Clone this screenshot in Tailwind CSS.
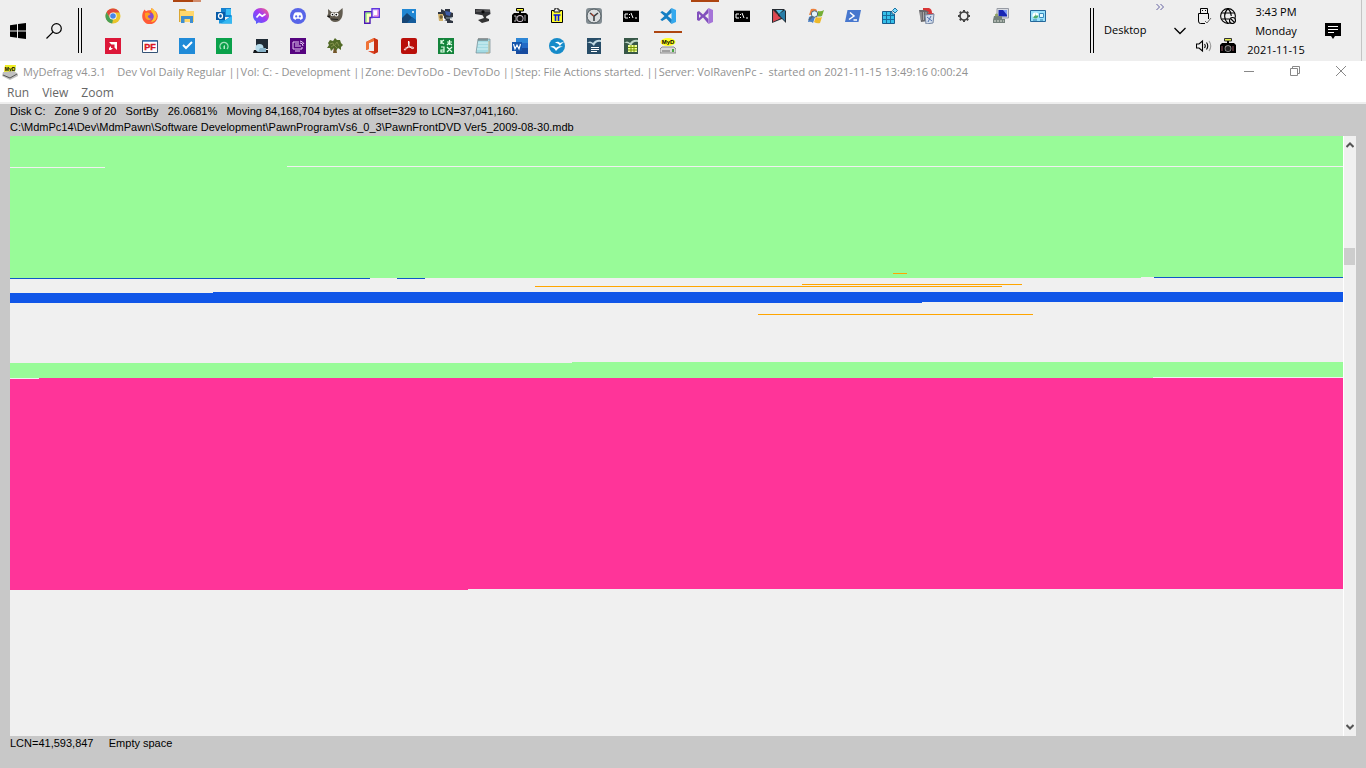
<!DOCTYPE html>
<html lang="en">
<head>
<meta charset="utf-8">
<title>MyDefrag v4.3.1</title>
<script src="https://cdn.jsdelivr.net/npm/@tailwindcss/browser@4"></script>
</head>
<body class="flex h-screen flex-col overflow-hidden bg-[#c8c8c8] font-['Open_Sans','Noto_Sans',sans-serif] text-xs text-black">
<header class="flex h-[61px] shrink-0 items-center bg-[#eeeeee]">
  <button aria-label="Start" class="ml-[10px]"><svg class="size-4" viewBox="0 0 16 16"><path d="M0 2.2 7 1.2V7.5H0ZM8 1 16 0V7.5H8ZM0 8.5H7V14.8L0 13.8ZM8 8.5H16V16L8 15Z"/></svg></button>
  <button aria-label="Search" class="ml-5"><svg class="size-4" viewBox="0 0 16 16" fill="none" stroke="#000" stroke-width="1.2"><circle cx="10.5" cy="5.5" r="4.8"/><path d="M7.1 8.9 0.5 15.5"/></svg></button>
  <div class="ml-4 h-[45px] w-1 border-x border-black"></div>
  <nav aria-label="Pinned programs" class="ml-3 grid grid-cols-[repeat(26,37px)] grid-rows-[31px_30px] [&>button]:relative [&>button]:flex [&>button]:items-center [&>button]:pl-[11px] [&_svg]:size-4">
    <button aria-label="Chrome"><svg viewBox="0 0 16 16"><circle cx="8" cy="8" r="7.5" fill="#eac52b"/><path d="M1.5 4.2A7.5 7.5 0 0 1 14.5 4.4H8L5 10Z" fill="#df493b"/><path d="M1.5 4.2 5 10 8 11.5 7.2 15.5A7.5 7.5 0 0 1 1.5 4.2Z" fill="#4a9f55"/><circle cx="8" cy="8" r="3.6" fill="#fff"/><circle cx="8" cy="8" r="2.8" fill="#4687e8"/></svg></button>
    <button aria-label="Firefox"><svg viewBox="0 0 16 16"><path d="M1 4 2.5 1.5 4 3.2C6 2 8 2.5 9 2L9.5 0C12 1.5 12.4 3 12.4 3L14 3.5A8 8 0 0 1 14 13 7.6 7.6 0 0 1 1 12C-.3 9 .2 6 1 4Z" fill="#ff5a36"/><path d="M9.5 0C14 3 15.5 6 14.5 10A6 6 0 0 1 9 14C12 11 12 6 9 3Z" fill="#ffc52d"/><circle cx="8" cy="8.5" r="3.7" fill="#854cd2"/><path d="M3 5C6 3.5 8 5 8.5 6.5L5.7 8C6 10 8 11 10 10.5 7 13.5 3 11.5 3 8Z" fill="#ff9d20"/></svg></button>
    <button aria-label="File Explorer"><i class="absolute left-[5px] top-0 flex h-0.5 w-7 bg-[#d28d6c]"><b class="w-5 bg-[#ad4510]"></b></i><svg viewBox="0 0 16 16"><path d="M0 1H6L7.5 3H15V14H0Z" fill="#d9a632"/><path d="M1 3H15V14H1Z" fill="#ffd76c"/><path d="M2 8H14V15H11V11H5.5V15H2Z" fill="#3e8ed0"/></svg></button>
    <button aria-label="Outlook"><svg viewBox="0 0 16 16"><path d="M5 0H15V9H5Z" fill="#1681d0"/><path d="M10 1H15V7H10Z" fill="#39bdf5"/><path d="M3 8 9.5 12 16 7V15.5H3Z" fill="#1494dd"/><path d="M5 15.5 16 8V15.5Z" fill="#35b8f1"/><path d="M0 4H9V12H0Z" fill="#075ba8"/><ellipse cx="4.5" cy="8" rx="2" ry="2.4" fill="none" stroke="#fff" stroke-width="1.3"/></svg></button>
    <button aria-label="Messenger"><svg viewBox="0 0 16 16"><defs><linearGradient id="messenger" x1="0" y1="1" x2="1" y2="0"><stop stop-color="#3b69ff"/><stop offset=".55" stop-color="#a239f5"/><stop offset="1" stop-color="#ff6576"/></linearGradient></defs><path d="M8 0C3 0 0 3.3 0 7.5 0 10 1 12 3 13.4V16L5.6 14.6C12 16 16 12 16 7.5 16 3 12.5 0 8 0Z" fill="url(#messenger)"/><path d="M3.5 9.5 6.5 6.2 9.2 8.2 12.5 6" fill="none" stroke="#fff" stroke-width="1.7"/></svg></button>
    <button aria-label="Discord"><svg viewBox="0 0 16 16"><circle cx="8" cy="8" r="8" fill="#5865e8"/><path d="M5 4.5 7 4.2H9L11 4.5C12.5 6 13 8.5 12.8 10.5L10.5 12 9.7 10.8H6.3L5.5 12 3.2 10.5C3 8.5 3.5 6 5 4.5Z" fill="#fff"/><circle cx="6.2" cy="8.4" r="1.1" fill="#5865e8"/><circle cx="9.8" cy="8.4" r="1.1" fill="#5865e8"/></svg></button>
    <button aria-label="GIMP"><svg viewBox="0 0 16 16"><path d="M1 1 5 4.5 11 4 15.5 0C16 5 16 10 12 13 8 15 4 14 2.5 10L0 8.5 1.2 5.5Z" fill="#625c50"/><path d="M0 8 3 7.5 2.5 10Z" fill="#111"/><circle cx="5.4" cy="6.5" r="1.8" fill="#fff"/><circle cx="9.4" cy="6.5" r="2.1" fill="#fff"/><circle cx="5.5" cy="6.6" r=".8"/><circle cx="9.3" cy="6.6" r=".9"/><path d="M4 11 11 11.5" stroke="#222"/></svg></button>
    <button aria-label="Display layouts"><svg viewBox="0 0 16 16"><path d="M.7 3.7H8V9.5H6V15.3H.7Z" fill="#ffffbd" stroke="#4b19b4" stroke-width="1.4"/><path d="M8 .7H15.3V9.3H8Z" fill="#eddaff" stroke="#6135dd" stroke-width="1.4"/><path d="M2 14V5H7" fill="none" stroke="#63d775"/><path d="M10 3H13V7H10Z" fill="#fff"/><path d="M14 2V8H10" fill="none" stroke="#e66ad5"/></svg></button>
    <button aria-label="Photos"><svg viewBox="0 0 16 16"><path d="M1 1H15V15H1Z" fill="#2187d3"/><path d="M1 10 6 5 15 13V15H1Z" fill="#164676"/><path d="M6 15 11 9 15 12V15Z" fill="#145c9c"/><circle cx="12" cy="4" r="1" fill="#fff"/></svg></button>
    <button aria-label="Device utility"><svg viewBox="0 0 16 16"><path d="M3 1 7 3V1H12V4L15 5V9L12 10V12L15 13V15H9V13L6 12V8L3 6H0V4H3Z" fill="#303642"/><path d="M7 3 13 4 12 8 8 7Z" fill="#3e5da8"/><path d="M0 6H5V13H1Z" fill="#d2b36d"/><path d="M3 7V11M1.5 9H5" stroke="#584a29"/><path d="M5 9 8 12H5Z" fill="#fff"/><path d="M8 10H14" stroke="#8aa0a8"/></svg></button>
    <button aria-label="Webcam"><svg viewBox="0 0 16 16"><path d="M0 1 15 1.5 15.5 6 12 8 0 6Z" fill="#303135"/><path d="M1 3H15" stroke="#777"/><path d="M7 6H12L11 10 14 11V13L7 15 3 12 9 10Z" fill="#333"/><circle cx="8" cy="3.8" r="1.6" fill="#090909"/></svg></button>
    <button aria-label="Camera"><svg viewBox="0 0 16 16"><path d="M4.5 .5H11.5V3H4.5Z" fill="#ffff35" stroke="#000"/><path d="M7 3H9V5H14L16 7V15H0V7L2 5H7Z"/><circle cx="8" cy="10.5" r="3.5" fill="#d2c5d2"/><circle cx="8" cy="10.5" r="2.6" fill="#111"/><path d="M2 8H4V13H2M12 8H14M12 10H14M12 12H14" stroke="#aaa" fill="none"/></svg></button>
    <button aria-label="Pi clipboard"><svg viewBox="0 0 16 16"><path d="M2.5 2.5H13.5V14.5H2.5Z" fill="#ffff31" stroke="#000"/><path d="M5 2H6V0H9V2H11V4H5Z" fill="#eee" stroke="#111"/><path d="M4.5 7H11.5M6.5 7V13M9.5 7V13" stroke="#0718dc" stroke-width="1.6"/></svg></button>
    <button aria-label="Alarms and Clock"><svg viewBox="0 0 16 16"><rect width="16" height="16" rx="3" fill="#828c92"/><circle cx="8" cy="8" r="7" fill="#dadddf" stroke="#4e585d" stroke-width="1"/><path d="M4 5 8 8.2 12 5M8 8V13" fill="none" stroke="#3e4246" stroke-width="1.6"/><path d="M8 8 5 5.5" stroke="#ce4a30"/></svg></button>
    <button aria-label="Command prompt"><svg viewBox="0 0 16 16"><path d="M0 2H16V14H0Z"/><path d="M0 2.5H16" stroke="#aaa"/><path d="M5 6H2V10H5M6.5 6V7M6.5 9V10M8 5 10 10M12 10H14" fill="none" stroke="#fff"/></svg></button>
    <button aria-label="Visual Studio Code"><svg viewBox="0 0 16 16"><path d="M11.5 0 6.3 5.5 2.2 3 .3 4.2 4.5 8 .3 11.8 2.2 13 6.3 10.5 11.5 16 12 11.5 7.8 8 12 4.5Z" fill="#157fc4"/><path d="M11.5 0 16 2V14L11.5 16Z" fill="#35a9ee"/></svg></button>
    <button aria-label="Visual Studio"><i class="absolute left-[5px] top-0 h-0.5 w-7 bg-[#ad4510]"></i><svg viewBox="0 0 16 16"><path d="M0 4 2 3 6 6.5 11.5 0V5L8 8 11.5 11V16L6 9.5 2 13 0 12ZM2 6V10L4 8Z" fill="#8250bd" fill-rule="evenodd"/><path d="M11.5 0 16 2V14L11.5 16Z" fill="#a574d8"/></svg></button>
    <button aria-label="Developer command prompt"><svg viewBox="0 0 16 16"><path d="M0 2H16V14H0Z"/><path d="M0 2.5H16" stroke="#aaa"/><path d="M5 6H2V10H5M6.5 6V7M6.5 9V10M8 5 10 10M12 10H14" fill="none" stroke="#fff"/></svg></button>
    <button aria-label="Notepad utility"><svg viewBox="0 0 16 16"><path d="M1 1H13L15 3V15L11 11 6 13 1 15Z" fill="#252a31"/><path d="M2 2 7 7V11L2 14Z" fill="#c84c50"/><path d="M5 2H12L8 6Z" fill="#55bfe3"/><path d="M8 6 14 2V13L10 9Z" fill="#287da7"/><path d="M3 5 10 10 6 12 2 13Z" fill="#df4651"/></svg></button>
    <button aria-label="Windows search"><svg viewBox="0 0 16 16"><path d="M3 1Q7 0 9 2L7 8Q4 6 1 7Z" fill="#ec813d"/><path d="M10 3Q13 4 16 2L14 8Q11 9 8 8Z" fill="#75ae35"/><path d="M1 9Q4 7 7 9L5 15Q3 13 0 14Z" fill="#497fc5"/><path d="M8 9Q11 10 14 9L12 15Q9 16 6 14Z" fill="#edb92b"/><circle cx="6.5" cy="6" r="3.2" fill="#e2f4fb" stroke="#52677a"/><path d="M4.2 8.5 1 12" stroke="#52677a" stroke-width="1.6"/></svg></button>
    <button aria-label="PowerShell"><svg viewBox="0 0 16 16"><path d="M2.5 2H16L13.5 14H0Z" fill="#4777ce"/><path d="M5 4.5 9 8 4 11.5M8.5 12H12" fill="none" stroke="#fff" stroke-width="1.5"/></svg></button>
    <button aria-label="Registry Editor"><svg viewBox="0 0 16 16"><path d="M.5 3.5H10V6H12.5V15.5H.5Z" fill="#35bfe9" stroke="#175c8e"/><path d="M1 7.5H12M1 11.5H12M4.5 4V15M8.5 4V15" stroke="#176c9d"/><path d="m13 0 2.5 2.5L13 5l-2.5-2.5Z" fill="#81dcff" stroke="#1b75a5"/></svg></button>
    <button aria-label="Uninstaller"><svg viewBox="0 0 16 16"><path d="M0 2H10L9 13 2 14Z" fill="#68686c"/><path d="M2 4V12M4.5 4V12M7 4V12" stroke="#aaa"/><path d="M4 0H10Q13 1 13 5L15 5 12 8 8 5H10Q9 2 4 2Z" fill="#d83535"/><path d="M6 7 15 6 14 15 7 16Z" fill="#d2deed" stroke="#74849f"/><path d="m8 9 5 4M12 8 9 14" stroke="#4d6fae"/></svg></button>
    <button aria-label="Settings"><svg viewBox="0 0 16 16"><circle cx="8" cy="8" r="4" fill="none" stroke="#444" stroke-width="1.7"/><path d="M8 2V4M8 12V14M2 8H4M12 8H14M3.8 3.8 5.2 5.2M10.8 10.8 12.2 12.2M12.2 3.8 10.8 5.2M5.2 10.8 3.8 12.2" stroke="#444" stroke-width="2"/></svg></button>
    <button aria-label="Remote computer"><svg viewBox="0 0 16 16"><path d="M4 .5H15.5V10H4Z" fill="#d9dce2" stroke="#979ba4"/><path d="M5.5 2H14V8.5H5.5Z" fill="#1826b4"/><path d="M10 2H14V7Z" fill="#7e9af7"/><path d="M1 8H9V11H12V15H0V12Z" fill="#74817c"/><path d="M1 13H11" stroke="#e2e6dc" stroke-dasharray="2 1"/><circle cx="3.5" cy="7" r="1.6" fill="#91a364"/></svg></button>
    <button aria-label="Control Panel"><svg viewBox="0 0 16 16"><path d="M.5 2.5H15.5V13.5H.5Z" fill="#9be2fc" stroke="#24679a"/><circle cx="5.5" cy="7.5" r="3" fill="#fff"/><path d="M5.5 4.5V7.5H8.5A3 3 0 0 1 3 9.2L5 7.5Z" fill="#4bae6f"/><path d="M9.5 5.5H13.5V9.5H9.5Z" fill="#dff7ff" stroke="#388cbf"/><path d="M3 12H7M10 12H13" stroke="#267dac"/></svg></button>

    <button aria-label="AMD Software" class="col-start-1"><svg viewBox="0 0 16 16"><path d="M0 0H16V16H0Z" fill="#dc1739"/><path d="M4 4H12V12L9.5 9.5V6.5H6.5ZM6 8V10H8L6 12H4V10Z" fill="#fff"/></svg></button>
    <button aria-label="PF"><svg viewBox="0 0 16 16"><path d="M.5 2.5H15.5V14.5H.5Z" fill="#fff" stroke="#355376"/><path d="M1 3H15" stroke="#3975b4" stroke-width="1.5"/><text x="8" y="12" text-anchor="middle" font-family="Liberation Sans" font-weight="bold" font-size="9" fill="#d81822" stroke="#d81822" stroke-width=".4">PF</text></svg></button>
    <button aria-label="Tasks"><svg viewBox="0 0 16 16"><path d="M0 0H16V16H0Z" fill="#208bd8"/><path d="m4 7 3 3 6-6" fill="none" stroke="#fff" stroke-width="2"/></svg></button>
    <button aria-label="Feedback"><svg viewBox="0 0 16 16"><path d="M0 0H16V16H0Z" fill="#0aa14a"/><path d="M5 11A4 4 0 1 1 11 11" fill="none" stroke="#a3dfba" stroke-width="1.4"/><path d="M7.5 11V8L9 7V11" fill="#b7eac7"/></svg></button>
    <button aria-label="Drive monitor"><svg viewBox="0 0 16 16"><path d="M3 1H15V11H3Z" fill="#202b35"/><path d="M1 12H15V15H0Z" fill="#14171b"/><circle cx="6.5" cy="10" r="4" fill="#b7dceb"/><path d="M7 10H13V14H5Z" fill="#87b2c8"/></svg></button>
    <button aria-label="Remote desktop"><svg viewBox="0 0 16 16"><path d="M0 0H16V16H0Z" fill="#560480"/><path d="M12 9V11H3V4H9M5 13H10M5 6H9M5 8H11M10 5A3 3 0 0 1 13 8M10 3A5 5 0 0 1 14 6" fill="none" stroke="#e5c9f2"/></svg></button>
    <button aria-label="Family tree"><svg viewBox="0 0 16 16"><path d="M7 9 9 10 10 15H6Z" fill="#745629"/><path d="M1 5 3 2 6 3 8 0 10 2 13 2 14 5 16 7 14 9 14 12 11 10 9 13 7 10 4 13 3 10 0 10 2 7Z" fill="#526a27"/><path d="M3 6 6 5 7 8 10 4 12 8M4 9 7 7 10 10" fill="none" stroke="#81904a"/></svg></button>
    <button aria-label="Office"><svg viewBox="0 0 16 16"><path d="M10 0 14 2V14L10 16 4 13 10 13V3L5 5V11L2 12V4Z" fill="#df4624"/><path d="M10 0 14 2V14L10 16Z" fill="#c83112"/><path d="M5 5 10 3V0L2 4V12L5 11Z" fill="#ef7336"/></svg></button>
    <button aria-label="Adobe Acrobat"><svg viewBox="0 0 16 16"><rect width="16" height="16" rx="2" fill="#b90f0a"/><path d="M7.5 3C9 4 8 7 6.5 9.5 5 12 3 13 3.5 11 4 10 7 9 10 9 14 9 13 11 11 10.5 8 9 7 5.5 7.5 3Z" fill="none" stroke="#fff"/></svg></button>
    <button aria-label="Character tool"><svg viewBox="0 0 16 16"><path d="M0 0H16V16H0Z" fill="#14843b"/><path d="M3 2V6M3 4 6 2M3 4 6 6M9 4H14M11.5 2V7M9 7 11 5 14 7M9 9 14 14M14 9 9 14M3 9H6V14H3V12H6" fill="none" stroke="#e3ffe9" stroke-width="1.2"/></svg></button>
    <button aria-label="Notepad"><svg viewBox="0 0 16 16"><path d="M3 1H15V15H1Z" fill="#a4dbe3" stroke="#728b92" stroke-width=".7"/><path d="M3 5H14M3 8H13M2 11H13" stroke="#d8f3f5"/><path d="M4 0V3M6 0V3M8 0V3M10 0V3M12 0V3" stroke="#666"/><path d="M14 3V15H11" stroke="#cbb58a" fill="none"/></svg></button>
    <button aria-label="Word"><svg viewBox="0 0 16 16"><path d="M4 0H16V16H4Z" fill="#2d86d6"/><path d="M4 5H16V10H4Z" fill="#236ac6"/><path d="M4 10H16V16H4Z" fill="#174b9f"/><path d="M0 4H10V13H0Z" fill="#1556ac"/><path d="M1.5 6 3 11 5 7 7 11 8.5 6" fill="none" stroke="#fff" stroke-width="1.2"/></svg></button>
    <button aria-label="OpenOffice"><svg viewBox="0 0 16 16"><circle cx="8" cy="8" r="8" fill="#168bc9"/><path d="M1 9C4 7 6 8 7 10 9 8 12 8 14 9 10 9 9 11 7 13 5 10 4 9 1 9ZM6 5C8 3 10 4 11 5 13 4 14 4 15 5 12 5 12 7 11 8 9 5 8 5 6 5Z" fill="#fff"/></svg></button>
    <button aria-label="OpenOffice Writer"><svg viewBox="0 0 16 16"><path d="M1 0H15V16H1Z" fill="#284d68"/><path d="M1 5Q4 2 7 5 10 1 15 2V4Q10 3 8 8 5 4 1 5Z" fill="#c3dbe4"/><path d="M5 9.5H13M5 11.5H13M5 13.5H11" stroke="#fff"/></svg></button>
    <button aria-label="OpenOffice Calc"><svg viewBox="0 0 16 16"><path d="M1 0H15V16H1Z" fill="#375747"/><path d="M1 5Q4 2 7 5 10 1 15 2V4Q10 3 8 8 5 4 1 5Z" fill="#bfd6c7"/><path d="M5 7H14V14H5Z" fill="#f0ff9d"/><path d="M5 9.5H14M5 12H14M8 7V14M11 7V14" stroke="#779500"/></svg></button>
    <button aria-label="MyDefrag"><i class="absolute left-[5px] top-0 h-0.5 w-7 bg-[#ad4510]"></i><svg viewBox="0 0 16 16"><ellipse cx="8" cy="4" rx="7.5" ry="4" fill="#ffff21"/><text x="8" y="6.3" text-anchor="middle" font-family="Liberation Sans" font-weight="bold" font-size="6">MyD</text><path d="M2 9H14L16 11V15H0V11Z" fill="#dadada" stroke="#777" stroke-width=".8"/><path d="M2 13H10" stroke="#666"/><path d="M12 11H14V14H12Z" fill="#48a542"/></svg></button>
  </nav>
  <section aria-label="Notification area" class="ml-auto flex h-full w-[276px] shrink-0 items-center">
    <div class="h-[45px] w-1 border-x border-black"></div>
    <span class="ml-[10px] w-[52px] text-[11px]">Desktop</span>
    <button aria-label="More desktop items" class="mb-12 text-[#6260a0]"><svg class="h-2 w-2" viewBox="0 0 8 8" fill="none" stroke="currentColor"><path d="m.5 1 3 3-3 3m4-6 3 3-3 3"/></svg></button>
    <button aria-label="Show hidden icons" class="ml-2.5"><svg class="h-2 w-3" viewBox="0 0 12 8" fill="none" stroke="#000" stroke-width="1.3"><path d="m.5 1 5.5 5.5L11.5 1"/></svg></button>
    <div class="ml-2.5 grid h-full w-10 grid-cols-[24px_16px] grid-rows-[31px_30px] items-center [&_svg]:size-4">
      <button aria-label="Safely remove hardware"><svg viewBox="0 0 16 16" fill="none" stroke="#000"><path d="M4.5 5V.5H11.5V5M9 15.5H4.5Q2.5 15.5 2.5 13V5.5H12.5V11"/><path d="M6 2.5H7M9 2.5H10"/><path d="m9 13 2 2 4-5" stroke="#666"/></svg></button>
      <button aria-label="No internet"><svg viewBox="0 0 16 16" fill="none" stroke="#000" stroke-width="1.1"><circle cx="8" cy="8" r="7.4"/><path d="M1.5 5H14.5M1.5 11H9M8 .5C3.5 5 3.5 11 8 15.5M8 .5Q11 3.5 11.3 8"/><circle cx="12.5" cy="12.5" r="3" fill="#eee"/><path d="m10.5 10.5 4 4"/></svg></button>
      <button aria-label="Volume"><svg viewBox="0 0 16 16" fill="none" stroke="#000" stroke-width="1.1"><path d="M.5 6H3L6.5 3V13L3 10H.5ZM8.5 6Q10 8 8.5 10M10.5 4.5Q13 8 10.5 11.5"/><path d="M13 3Q16.5 8 13 13" stroke="#999"/></svg></button>
      <button aria-label="Camera status"><svg viewBox="0 0 16 16"><path d="M4.5 .5H11.5V3H4.5Z" fill="#e9ef50" stroke="#333"/><path d="M7 3H9V5H14L16 7V15H0V7L2 5H7Z"/><circle cx="8" cy="10.5" r="3.3" fill="#aaa"/><circle cx="8" cy="10.5" r="2.6" fill="#222"/><path d="M2 8V13M13 8V13" stroke="#985665"/></svg></button>
    </div>
    <time datetime="2021-11-15T15:43" class="ml-1 flex w-[72px] flex-col text-center text-[11px] leading-[19px]"><span>3:43 PM</span><span>Monday</span><span>2021-11-15</span></time>
    <button aria-label="Notifications" class="ml-[13px]"><svg class="size-4" viewBox="0 0 16 16"><path d="M0 0H16V13H10L8 16 6 13H0Z"/><path d="M3 3.5H13M3 6.5H13M3 9.5H9" stroke="#fff"/></svg></button>
    <div class="ml-auto mr-1 h-full w-px bg-[#c4c4c4]"></div>
  </section>
</header>
<main class="flex min-h-0 flex-1 flex-col">
  <div class="flex h-[23px] shrink-0 items-center bg-white text-[#929292]">
    <svg class="ml-0.5 size-4" viewBox="0 0 16 16"><path d="M3 0H14L13 7H2Z" fill="#eeed25"/><text x="8" y="5.5" text-anchor="middle" font-family="Liberation Sans" font-weight="bold" font-size="5">MyD</text><path d="M1 7 12 6 16 9V11L8 15 0 11Z" fill="#c0c0c0"/><path d="m1 10 7 3 7-4" fill="none" stroke="#555"/></svg>
    <h1 class="ml-[5px] whitespace-pre text-[11px]">MyDefrag v4.3.1    Dev Vol Daily Regular ||Vol: C: - Development ||Zone: DevToDo - DevToDo ||Step: File Actions started. ||Server: VolRavenPc -  started on 2021-11-15 13:49:16 0:00:24</h1>
    <div class="ml-auto mr-5 flex items-center gap-9 pb-1 text-[#888888]">
      <button aria-label="Minimize"><svg class="h-2.5 w-2.5" viewBox="0 0 10 10" stroke="currentColor"><path d="M0 5.5H10"/></svg></button>
      <button aria-label="Restore"><svg class="h-2.5 w-2.5" viewBox="0 0 10 10" fill="none" stroke="currentColor"><path d="M.5 2.5H7.5V9.5H.5ZM2.5 2.5V.5H9.5V7.5H7.5"/></svg></button>
      <button aria-label="Close"><svg class="h-2.5 w-2.5" viewBox="0 0 10 10" stroke="currentColor"><path d="m0 0 10 10M10 0 0 10"/></svg></button>
    </div>
  </div>
  <nav aria-label="Menu" class="flex h-5 shrink-0 items-center gap-[13px] border-b-2 border-[#eeeeee] bg-white pl-[7px] text-[#666666]"><button>Run</button><button>View</button><button>Zoom</button></nav>
  <div class="flex h-8 shrink-0 flex-col gap-px whitespace-pre pl-[10px] font-['Liberation_Sans',sans-serif] text-[11px] leading-[15px]"><p>Disk C:   Zone 9 of 20   SortBy   26.0681%   Moving 84,168,704 bytes at offset=329 to LCN=37,041,160.</p><p>C:\MdmPc14\Dev\MdmPawn\Software Development\PawnProgramVs6_0_3\PawnFrontDVD Ver5_2009-08-30.mdb</p></div>
  <div class="mx-[10px] flex min-h-0 flex-1 bg-[#f0f0f0]">
    <svg id="map" role="img" aria-label="Disk cluster map" class="h-full min-w-0 flex-1" viewBox="0 0 1333 600" preserveAspectRatio="none" shape-rendering="crispEdges">
      <path fill="#98fb98" d="M0 0H1333V141H1131V142H0ZM0 227H562V226H1333V241H1143V242H0Z"/>
      <path fill="#f0f0f0" d="M0 31H95V32H0ZM277 30H1333V31H277Z"/>
      <path fill="#1056e8" d="M0 157H203V156H1333V166H912V167H0Z"/>
      <path fill="#1056c8" d="M0 142H360V143H0ZM387 142H415V143H387ZM1144 141H1333V142H1144Z"/>
      <path fill="#ffa500" d="M883 137H897V138H883ZM792 148H1012V149H792ZM525 150H992V151H525ZM748 178H1023V179H748Z"/>
      <path fill="#ff3499" d="M0 243H29V242H1333V453H458V454H0Z"/>
    </svg>
    <div role="scrollbar" aria-label="Disk map position" aria-controls="map" aria-valuenow="17" class="flex w-[13px] flex-col border-l border-white">
      <button aria-label="Scroll up" class="flex h-[18px] items-center justify-center"><svg class="h-1.5 w-2" viewBox="0 0 8 6" fill="none" stroke="#555" stroke-width="2"><path d="m.5 5 3.5-3.5L7.5 5"/></svg></button>
      <div class="flex flex-1 flex-col"><div class="h-[94px]"></div><div class="h-[17px] w-[11px] bg-[#cdcdcd]"></div></div>
      <button aria-label="Scroll down" class="flex h-[18px] items-center justify-center"><svg class="h-1.5 w-2" viewBox="0 0 8 6" fill="none" stroke="#555" stroke-width="2"><path d="M.5 1 4 4.5 7.5 1"/></svg></button>
    </div>
  </div>
  <footer class="h-8 shrink-0 whitespace-pre pl-[10px] font-['Liberation_Sans',sans-serif] text-[11px] leading-[15px]">LCN=41,593,847     Empty space</footer>
</main>
</body>
</html>
